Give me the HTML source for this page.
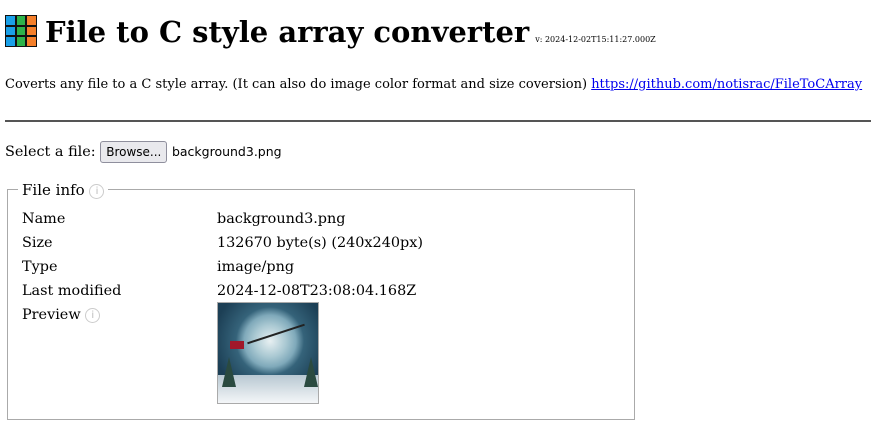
<!DOCTYPE html>
<html><head><style>
body{margin:0;font-family:"DejaVu Serif",serif;font-size:14.4px;color:#000;background:#fff;width:871px;height:425px;overflow:hidden;position:relative}
.a{position:absolute;white-space:nowrap}
h1{position:absolute;left:45px;top:15px;margin:0;font-size:29px;font-weight:bold;white-space:nowrap}
.v{font-size:8px;font-weight:normal;margin-left:6px}
.logo{position:absolute;left:5px;top:15px;width:32px;height:32px;background:#111;display:grid;grid-template-columns:repeat(3,1fr);gap:2px;padding:1px;box-sizing:border-box}
a{color:#0000ee;text-decoration:underline}
hr{position:absolute;left:5px;top:120px;width:866px;margin:0;border:0;border-top:2px solid #555}
.btn{display:inline-block;font-family:"DejaVu Sans",sans-serif;font-size:12px;background:#e9e9ed;border:1px solid #8f8f9d;border-radius:3px;padding:3px 5px;vertical-align:middle}
.fs{position:absolute;left:7px;top:189px;width:626px;height:229px;border:1px solid #aaa}
.leg{position:absolute;left:18px;top:181px;background:#fff;padding:0 4px 0 4px;font-size:15px}
.i{display:inline-block;width:13px;height:13px;border:1px solid #ccc;border-radius:50%;color:#bbb;font-size:10px;text-align:center;line-height:13px;vertical-align:1px;font-family:"DejaVu Sans",sans-serif}
.r{font-size:14.4px}
.img{position:absolute;left:217px;top:302px;width:102px;height:102px;border:1px solid #aaa;box-sizing:border-box;background:radial-gradient(circle at 52% 38%,#e8f0f2 0,#a9c8d2 20%,#7fa9ba 32%,#35637a 42%,#1c3f55 70%);overflow:hidden}
.snow{position:absolute;left:0;bottom:0;width:100%;height:28%;background:linear-gradient(#b8c8d2,#f4f6f8)}
.t{position:absolute;bottom:16px;width:0;height:0;border-left:7px solid transparent;border-right:7px solid transparent;border-bottom:30px solid #2a4a40}
</style></head><body>
<div class="logo"><i style="background:#1aa0e8"></i><i style="background:#2db34a"></i><i style="background:#f57f2a"></i><i style="background:#1aa0e8"></i><i style="background:#2db34a"></i><i style="background:#f57f2a"></i><i style="background:#1aa0e8"></i><i style="background:#2db34a"></i><i style="background:#f57f2a"></i></div>
<h1>File to C style array converter<span class="v">v: 2024-12-02T15:11:27.000Z</span></h1>
<div class="a" style="left:5px;top:77px;font-size:13px">Coverts any file to a C style array. (It can also do image color format and size coversion) <a>https://github.com/notisrac/FileToCArray</a></div>
<hr>
<div class="a" style="left:5px;top:141px;font-size:14.4px">Select a file: <span class="btn">Browse...</span> <span style="font-family:'DejaVu Sans',sans-serif;font-size:12.5px">background3.png</span></div>
<div class="fs"></div>
<div class="leg">File info <span class="i">i</span></div>
<div class="a r" style="left:22px;top:207px;line-height:24px">Name<br>Size<br>Type<br>Last modified<br>Preview <span class="i">i</span></div>
<div class="a r" style="left:217px;top:207px;line-height:24px">background3.png<br>132670 byte(s) (240x240px)<br>image/png<br>2024-12-08T23:08:04.168Z</div>
<div class="img"><div class="snow"></div><div class="t" style="left:4px"></div><div class="t" style="left:86px"></div><div style="position:absolute;left:12px;top:38px;width:14px;height:8px;background:#a0182a"></div><div style="position:absolute;left:28px;top:30px;width:60px;height:2px;background:#222;transform:rotate(-18deg)"></div></div>
</body></html>
